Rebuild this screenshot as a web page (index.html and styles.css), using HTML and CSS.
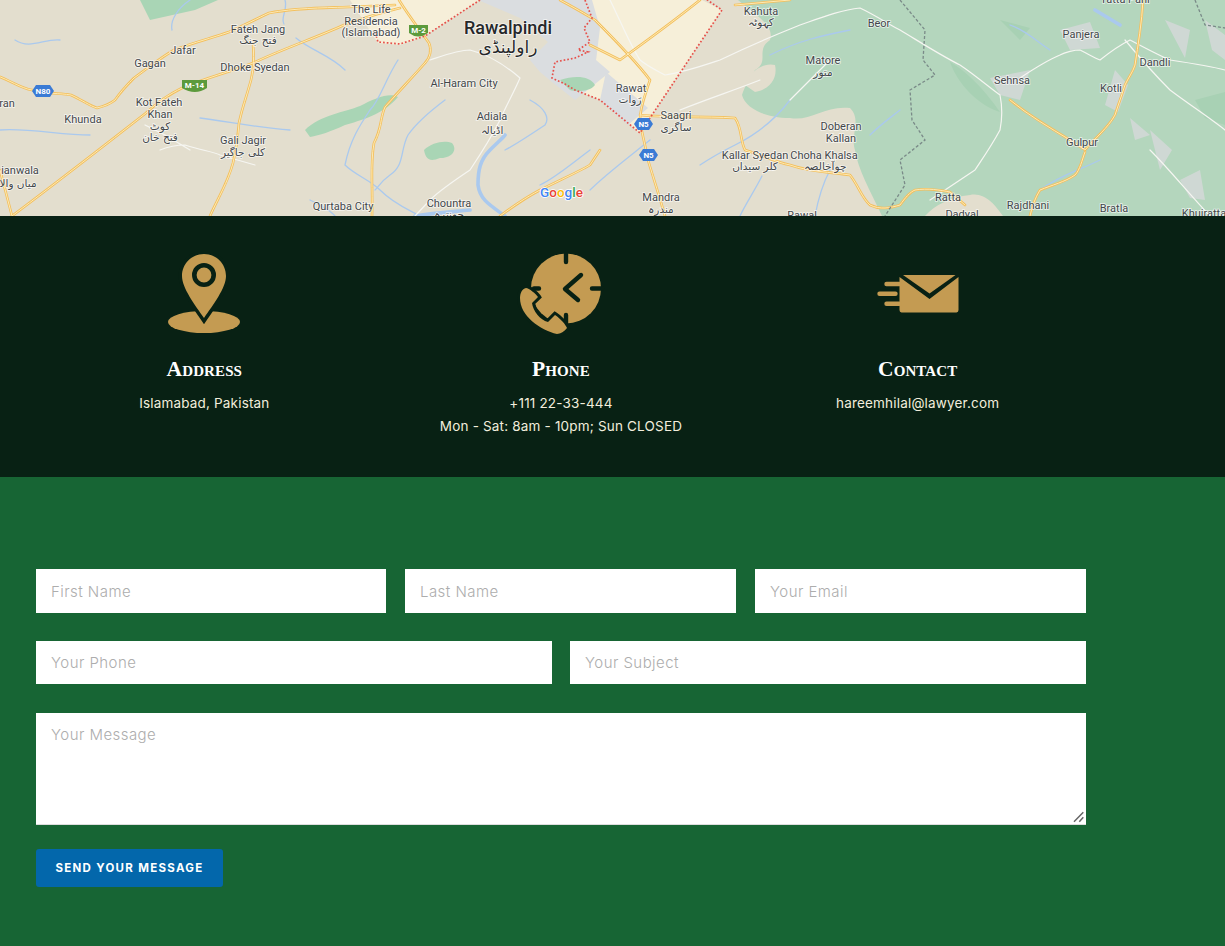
FILE: index.html
```html
<!DOCTYPE html>
<html lang="en">
<head>
<meta charset="utf-8">
<title>Contact</title>
<link rel="stylesheet" href="styles.css">
</head>
<body>
<section class="map">
<svg class="map-svg" viewBox="0 0 1225 216" width="1225" height="216" aria-label="Map">
  <g class="map-ground">
    <rect width="1225" height="216" fill="#e3dece"/>
    <path fill="#b4d6bd" d="M738 0C755 15 775 25 770 40C755 50 770 62 755 70C750 80 745 85 742 95C745 108 765 118 790 118C810 122 825 105 850 108C862 120 850 135 855 150C858 170 870 190 882 216H1225V0Z"/>
    <path fill="#e3dece" d="M745 85C750 70 765 62 775 65C778 78 770 90 755 92ZM925 216C935 205 950 197 970 195C985 192 995 205 1003 216Z"/>
    <path fill="#a8d1b4" d="M950 62C965 70 985 90 1000 112C985 108 960 90 950 62ZM1195 100L1225 92V125L1205 118ZM1000 20L1030 28L1020 40Z"/>
    <path fill="#cfd8d4" d="M1115 70L1128 85L1118 112L1105 105ZM1150 130L1172 150L1160 170ZM1180 180L1200 170L1205 200L1190 198ZM1060 30L1090 22L1100 48L1070 50ZM1165 20L1190 30L1185 58ZM990 78L1030 70L1020 100L1000 95ZM1130 118L1150 135L1135 140ZM1205 20L1225 35V60L1212 50Z"/>
    <path fill="#f6efd9" d="M350 0H480L425 36L400 45L378 43ZM590 0H702L722 10L640 133L600 100L575 90L596 60L598 28Z"/>
    <path fill="#dadde0" d="M478 0H592L600 28L596 60L610 72L575 100L552 82L540 72L530 60L548 42L520 18Z"/>
    <path fill="#dadde0" d="M606 72L648 108L628 125L600 100Z"/>
    <path fill="#a9d5b5" d="M140 0H218L195 10L150 20ZM305 130C320 115 345 112 360 106C375 98 390 92 398 97C385 112 370 118 345 125C330 132 320 135 310 137ZM424 150C432 142 445 140 452 143C458 150 452 158 440 158C430 162 426 160 424 150ZM560 80C575 75 590 76 595 85C590 92 575 92 570 90Z"/>
    <g fill="none" stroke="#aac9ee" stroke-width="1.3" stroke-linecap="round">
      <path d="M172 30C170 20 178 8 190 0M285 0C288 10 280 18 284 24M296 38C310 50 330 55 345 70M398 60C385 80 380 100 370 110C360 125 350 140 345 165C355 175 370 180 380 190C395 205 410 210 420 216M445 100C425 115 415 125 408 135C400 150 405 165 390 175C380 182 378 188 375 190M530 100C545 108 550 118 545 125C530 135 515 145 505 150M590 150C570 165 555 178 540 185M0 130C30 128 60 135 90 135M15 40C30 50 45 38 60 40M200 118C230 122 260 128 290 130M310 200C320 205 330 210 335 216M650 140C625 160 605 175 590 190M700 165C715 155 725 150 735 145C755 135 775 120 790 100M762 176C755 190 745 205 740 216M830 170C822 185 818 200 815 216M770 55C800 40 825 35 850 30M870 135C880 125 890 118 900 110M1040 190C1060 175 1080 170 1100 160M1050 50C1035 40 1025 30 1010 25"/>
      <path stroke-width="3.6" d="M505 216C490 205 480 200 478 185C478 170 480 160 490 150C498 142 503 138 505 135M1120 25L1095 10M415 216C435 213 450 212 470 210"/>
    </g>
    <g fill="none" stroke="#f6f6f2" stroke-width="1.2" stroke-linecap="round" stroke-linejoin="round">
      <path d="M430 60C445 55 458 50 470 50C490 55 505 65 520 78C515 90 505 108 500 120C490 140 480 155 470 170C455 180 440 190 430 200L415 216M160 150C170 146 178 145 185 145C200 150 215 152 220 155L255 165M145 125L165 135L190 150M610 0C620 20 630 45 640 60C650 68 660 72 665 75C685 72 705 65 720 60C745 48 775 35 800 25C820 18 840 10 860 8C875 15 890 25 900 30C920 42 940 55 960 65C975 75 990 88 1000 95C1003 110 1002 120 1000 130C992 145 985 155 975 170C960 180 945 190 930 200M1020 78C1035 68 1048 60 1060 55C1065 52 1075 50 1080 50C1090 55 1095 58 1100 60C1110 52 1120 45 1130 40C1145 48 1158 55 1170 60C1190 63 1210 66 1225 70M680 110C710 98 735 90 760 80M830 60C815 75 805 85 790 100M1150 150C1170 170 1190 195 1210 216M1125 40C1140 58 1155 75 1170 90C1190 105 1210 118 1225 130"/>
    </g>
    <g fill="none" stroke="#f3bf5c" stroke-width="2.6" stroke-linejoin="round" stroke-linecap="round">
      <path d="M12 216C60 180 105 145 146 113C160 100 170 94 182 88C205 78 230 72 253 63C285 48 315 38 344 25C365 17 385 12 400 8"/>
      <path d="M-5 75C10 80 20 88 32 90C45 94 60 93 71 95C82 100 90 106 97 108C105 106 110 104 115 100C122 90 128 84 134 78C148 68 160 58 174 50C195 42 212 38 229 32C245 25 258 18 269 13C295 8 320 8 348 7L395 5"/>
      <path d="M253 43C254 55 254 68 251 80C247 95 242 108 239 123C238 138 236 150 233 163C228 182 218 198 210 216"/>
      <path d="M399 0C408 15 420 30 429 43C432 50 430 58 425 63C412 78 398 92 385 107C380 118 382 128 374 143C370 165 373 190 372 216"/>
      <path d="M560 0C575 8 585 14 595 20C615 40 635 60 650 80C645 95 640 108 640 120C642 135 646 148 648 160C654 180 660 198 665 216M500 216C515 205 525 198 540 190C560 180 578 172 590 165L600 150M0 170L12 216M700 0C675 20 645 42 620 60L590 45"/>
      <path d="M640 115C670 118 705 116 735 118C742 128 740 140 745 150C762 155 775 162 790 165C810 172 830 172 850 175C858 185 862 198 870 205C880 210 890 208 900 205C905 198 910 192 915 190C928 188 940 190 950 192L965 205M1010 100C1028 115 1050 128 1070 140L1085 150C1095 138 1108 128 1115 115C1118 105 1122 95 1125 85C1128 78 1133 72 1135 65C1138 45 1142 22 1143 0M1085 152C1082 160 1080 170 1075 175C1065 182 1052 185 1040 190C1035 198 1032 207 1030 216M735 5L790 0"/>
    </g>
    <g fill="none" stroke="#fdeab5" stroke-width="1" stroke-linejoin="round" stroke-linecap="round">
      <path d="M12 216C60 180 105 145 146 113C160 100 170 94 182 88C205 78 230 72 253 63C285 48 315 38 344 25C365 17 385 12 400 8"/>
      <path d="M-5 75C10 80 20 88 32 90C45 94 60 93 71 95C82 100 90 106 97 108C105 106 110 104 115 100C122 90 128 84 134 78C148 68 160 58 174 50C195 42 212 38 229 32C245 25 258 18 269 13C295 8 320 8 348 7L395 5"/>
      <path d="M253 43C254 55 254 68 251 80C247 95 242 108 239 123C238 138 236 150 233 163C228 182 218 198 210 216"/>
      <path d="M399 0C408 15 420 30 429 43C432 50 430 58 425 63C412 78 398 92 385 107C380 118 382 128 374 143C370 165 373 190 372 216"/>
      <path d="M560 0C575 8 585 14 595 20C615 40 635 60 650 80C645 95 640 108 640 120C642 135 646 148 648 160C654 180 660 198 665 216M500 216C515 205 525 198 540 190C560 180 578 172 590 165L600 150M0 170L12 216M700 0C675 20 645 42 620 60L590 45"/>
      <path d="M640 115C670 118 705 116 735 118C742 128 740 140 745 150C762 155 775 162 790 165C810 172 830 172 850 175C858 185 862 198 870 205C880 210 890 208 900 205C905 198 910 192 915 190C928 188 940 190 950 192L965 205M1010 100C1028 115 1050 128 1070 140L1085 150C1095 138 1108 128 1115 115C1118 105 1122 95 1125 85C1128 78 1133 72 1135 65C1138 45 1142 22 1143 0M1085 152C1082 160 1080 170 1075 175C1065 182 1052 185 1040 190C1035 198 1032 207 1030 216M735 5L790 0"/>
    </g>
    <path fill="none" stroke="#e6504a" stroke-width="1.7" stroke-dasharray="1.7 2" d="M480 0L425 36L400 44L378 42L375 32M585 0L592 18L584 28L590 42L578 50L588 52L575 58L555 62L552 78L565 84L575 90L600 100L640 133L722 10L700 -5"/>
    <path fill="none" stroke="#7a8a88" stroke-width="1.3" stroke-dasharray="3 2" d="M900 0L925 30L923 60L935 75L910 90L912 120L925 140L900 160L905 185L885 216M1195 0L1205 25L1225 28"/>
  </g>
  <g class="shield">
    <path fill="#3a7bd5" d="M32 91L36 85H50L54 91L50 97H36Z"/>
    <text class="shield-t" x="43" y="94">N80</text>
    <path fill="#5c9a3c" d="M182 80H207V88Q195 96 182 88Z"/>
    <text class="shield-t" x="194.5" y="88">M-14</text>
    <path fill="#5c9a3c" d="M409 25H428V33Q418 40 409 33Z"/>
    <text class="shield-t" x="418.5" y="33">M-2</text>
    <path fill="#3a7bd5" d="M634 124L638 118H649L653 124L649 130H638Z"/>
    <text class="shield-t" x="643.5" y="127">N5</text>
    <path fill="#3a7bd5" d="M639 155L643 149H654L658 155L654 161H643Z"/>
    <text class="shield-t" x="648.5" y="158">N5</text>
  </g>
  <g class="labels">
    <text x="258" y="33">Fateh Jang</text><text class="ur" x="258" y="44">فتح جنگ</text>
    <text x="183" y="54">Jafar</text><text x="150" y="67">Gagan</text><text x="255" y="71">Dhoke Syedan</text>
    <text x="159" y="106">Kot Fateh</text><text x="160" y="118">Khan</text><text class="ur" x="160" y="130">کوٹ</text><text class="ur" x="160" y="141">فتح خان</text>
    <text x="83" y="123">Khunda</text><text x="243" y="144">Gali Jagir</text><text class="ur" x="243" y="156">کلی جاگیر</text>
    <text x="20" y="174">ianwala</text><text class="ur" x="18" y="187">میاں والا</text><text x="7" y="107">ran</text>
    <text x="371" y="13">The Life</text><text x="371" y="25">Residencia</text><text x="371" y="36">(Islamabad)</text>
    <text class="big" x="508" y="34">Rawalpindi</text><text class="big-ur" x="508" y="53">راولپنڈی</text>
    <text x="464" y="87">Al-Haram City</text><text x="492" y="120">Adiala</text><text class="ur" x="492" y="134">اڈیالہ</text>
    <text x="343" y="210">Qurtaba City</text><text x="449" y="207">Chountra</text><text class="ur" x="449" y="218">چونترہ</text>
    <text x="631" y="92">Rawat</text><text class="ur" x="630" y="103">رَوات</text>
    <text x="676" y="119">Saagri</text><text class="ur" x="676" y="131">ساگری</text>
    <text x="761" y="15">Kahuta</text><text class="ur" x="761" y="26">کہوٹہ</text>
    <text x="879" y="27">Beor</text><text x="823" y="64">Matore</text><text class="ur" x="823" y="76">متور</text>
    <text x="1012" y="84">Sehnsa</text><text x="1081" y="38">Panjera</text><text x="1155" y="66">Dandli</text><text x="1111" y="92">Kotli</text><text x="1082" y="146">Gulpur</text>
    <text x="841" y="130">Doberan</text><text x="841" y="142">Kallan</text>
    <text x="755" y="159">Kallar Syedan</text><text x="824" y="159">Choha Khalsa</text><text class="ur" x="755" y="170">کلر سیداں</text><text class="ur" x="825" y="170">چوآخالصہ</text>
    <text x="661" y="201">Mandra</text><text class="ur" x="661" y="213">مندرہ</text>
    <text x="948" y="201">Ratta</text><text x="1028" y="209">Rajdhani</text><text x="962" y="218">Dadyal</text><text x="1114" y="212">Bratla</text><text x="1204" y="217">Khuiratta</text><text x="802" y="219">Rawal</text><text x="1125" y="3">Tatta Pani</text>
  </g>
  <text class="google" x="540" y="197"><tspan fill="#4285f4">G</tspan><tspan fill="#ea4335">o</tspan><tspan fill="#fbbc05">o</tspan><tspan fill="#4285f4">g</tspan><tspan fill="#34a853">l</tspan><tspan fill="#ea4335">e</tspan></text>
</svg>
</section>

<section class="info">
  <div class="info-col">
    <svg class="info-icon" width="90" height="88" viewBox="0 0 90 88">
      <ellipse cx="45" cy="70" rx="36" ry="11" fill="#c49b52"/>
      <path class="pin" d="M45 2C32.500 2 23 12 23 24C23 36 36 53 45 66C54 53 67 36 67 24C67 12 57.500 2 45 2Z" fill="#c49b52" stroke="#082114" stroke-width="7"/>
      <circle cx="45" cy="23" r="9.700" fill="none" stroke="#082114" stroke-width="4.600"/>
    </svg>
    <h3 class="info-title">Address</h3>
    <p class="info-text">Islamabad, Pakistan</p>
  </div>
  <div class="info-col">
    <svg class="info-icon" width="90" height="88" viewBox="516 252 90 88">
      <circle cx="566" cy="288.500" r="35" fill="#c49b52"/>
      <path d="M566 253V262M566 315V324M592 288.500H602M534 288.500H539" stroke="#082114" stroke-width="4.400" stroke-linecap="round"/>
      <path d="M581 275L565 289L578 300" fill="none" stroke="#082114" stroke-width="4.400" stroke-linecap="round" stroke-linejoin="round"/>
      <path class="handset" d="M526 288C529 288 536 294 538 297L532 303C533 311 540 320 548 322L555 315C560 318 566 325 567 328C565 331 560 334 557 334C540 330 520 316 520 298C520 293 522 289 526 288Z" fill="#c49b52" stroke="#082114" stroke-width="6"/>
    </svg>
    <h3 class="info-title">Phone</h3>
    <p class="info-text">+111 22-33-444</p>
    <p class="info-text">Mon - Sat: 8am - 10pm; Sun CLOSED</p>
  </div>
  <div class="info-col">
    <svg class="info-icon" width="90" height="88" viewBox="872.500 252 90 88">
      <path d="M899 277V310Q899 312.400 901 312.400H956Q958 312.400 958 310V277L929 299Z" fill="#c49b52"/>
      <path d="M902.500 275H955L929 293.500Z" fill="#c49b52"/>
      <path d="M886 284H899M879 293.800H895M886 303.700H899" stroke="#c49b52" stroke-width="4.400" stroke-linecap="round"/>
    </svg>
    <h3 class="info-title">Contact</h3>
    <p class="info-text">hareemhilal@lawyer.com</p>
  </div>
</section>

<section class="form-section">
  <form class="contact-form">
    <div class="form-row row-three">
      <input class="field" type="text" placeholder="First Name">
      <input class="field" type="text" placeholder="Last Name">
      <input class="field" type="text" placeholder="Your Email">
    </div>
    <div class="form-row row-two">
      <input class="field" type="text" placeholder="Your Phone">
      <input class="field" type="text" placeholder="Your Subject">
    </div>
    <div class="message-wrap">
      <textarea class="field message" placeholder="Your Message"></textarea>
      <svg class="grip" width="12" height="12" viewBox="0 0 12 12"><path d="M1 10.700L10.300 1.300M6.300 10.700L10.300 6.300" stroke="#666" stroke-width="1.500" fill="none"/></svg>
    </div>
    <button class="send" type="button">SEND YOUR MESSAGE</button>
  </form>
</section>
</body>
</html>
```
FILE: styles.css
```css
* { box-sizing: border-box; }
html, body { margin: 0; padding: 0; }
body { font-family: "Inter", "Liberation Sans", sans-serif; background: #176534; overflow: hidden; }

.map { height: 216px; overflow: hidden; }
.map-svg { display: block; }
.map-ground { filter: blur(0.35px); }
.labels text {
  font-family: "Roboto", "DejaVu Sans", sans-serif;
  font-size: 11px;
  fill: #43474a;
  stroke: #fff;
  stroke-width: 1.6px;
  stroke-opacity: .7;
  paint-order: stroke;
  text-anchor: middle;
}
.labels .ur { font-family: "DejaVu Sans", sans-serif; font-size: 10.5px; }
.labels .big { font-size: 18px; font-weight: 500; fill: #26282a; }
.labels .big-ur { font-family: "DejaVu Sans", sans-serif; font-size: 17px; fill: #26282a; }
.shield-t { font-family: "Roboto", sans-serif; font-size: 8px; font-weight: 700; fill: #fff; text-anchor: middle; }
.google { font-family: "Roboto", sans-serif; font-size: 13.5px; font-weight: 500; stroke: #fff; stroke-width: 1.5px; paint-order: stroke; }

.info {
  height: 261px;
  background: #082114;
  padding: 36px 129px 0 26px;
  display: grid;
  grid-template-columns: repeat(3, 1fr);
}
.info-col { display: flex; flex-direction: column; align-items: center; text-align: center; }
.info-icon { display: block; margin-bottom: 16px; }
.pin, .handset { paint-order: stroke; }
.info-title {
  margin: 0 0 10px;
  font-family: "Liberation Serif", serif;
  font-variant: small-caps;
  font-size: 21.5px;
  line-height: 26px;
  font-weight: 700;
  letter-spacing: .1px;
  color: #fff;
}
.info-text {
  margin: 0;
  font-size: 13.5px;
  line-height: 23px;
  color: #f2eedd;
  letter-spacing: .18px;
}

.form-section { padding: 92px 139px 0 36px; height: 469px; }
.contact-form { display: flex; flex-direction: column; align-items: flex-start; }
.form-row { display: grid; width: 100%; margin-bottom: 28px; }
.row-three { grid-template-columns: 350px 331px 331px; column-gap: 19px; height: 44px; }
.row-two { grid-template-columns: 516px 516px; column-gap: 18px; height: 43px; margin-bottom: 29px; }
.field {
  display: block;
  width: 100%;
  height: 100%;
  border: 0;
  border-radius: 0;
  background: #fff;
  padding: 0 15px;
  font-family: inherit;
  font-size: 15px;
  font-weight: 300;
  letter-spacing: .45px;
  color: #333;
}
.field::placeholder { color: #adadad; opacity: 1; }
.message-wrap { position: relative; width: 100%; height: 112px; margin-bottom: 24px; }
.message {
  padding: 13px 15px;
  border-bottom: 1px solid #ddd;
  line-height: 18px;
  resize: none;
}
.grip { position: absolute; right: 1px; bottom: 2px; }
.send {
  width: 187px;
  height: 38px;
  border: 0;
  border-radius: 3px;
  background: #0367ab;
  color: #fff;
  font-family: inherit;
  font-size: 11.5px;
  font-weight: 700;
  letter-spacing: 1.3px;
  padding: 0;
}
```
